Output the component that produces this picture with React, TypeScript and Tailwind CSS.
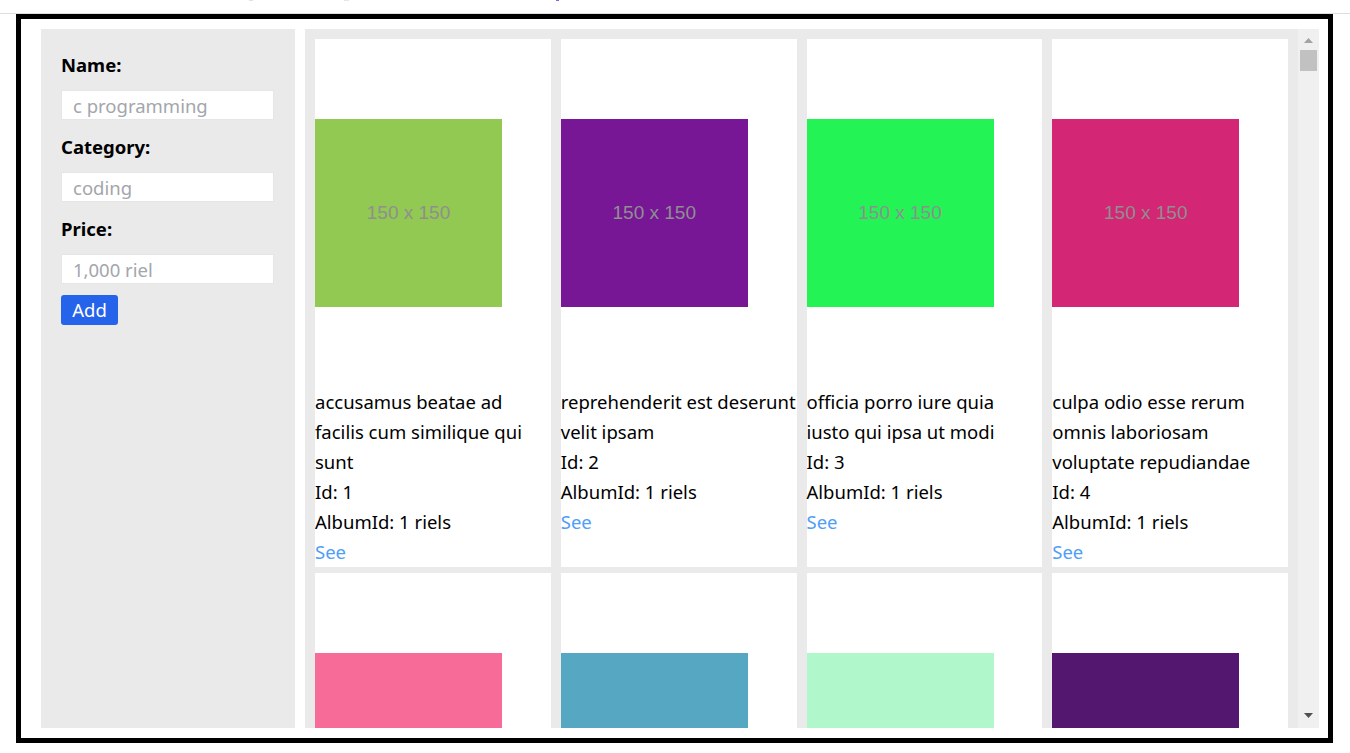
import React from "react";

type Card = { lines: string[]; id: number; color: string; text?: string };

const cards: Card[] = [
  { lines: ["accusamus beatae ad", "facilis cum similique qui", "sunt"], id: 1, color: "#92c952" },
  { lines: ["reprehenderit est deserunt", "velit ipsam"], id: 2, color: "#771796" },
  { lines: ["officia porro iure quia", "iusto qui ipsa ut modi"], id: 3, color: "#24f355" },
  { lines: ["culpa odio esse rerum", "omnis laboriosam", "voluptate repudiandae"], id: 4, color: "#d32776" },
  { lines: ["natus nisi omnis corporis", "facere molestiae rerum in"], id: 5, color: "#f66b97" },
  { lines: ["accusamus ea aliquid et", "amet sequi nemo"], id: 6, color: "#56a8c2" },
  { lines: ["officia delectus", "consequatur vero aut", "veniam explicabo molestias"], id: 7, color: "#b0f7cc" },
  { lines: ["aut porro officiis laborum", "odit ea laudantium corporis"], id: 8, color: "#54176f" },
];

function Field({ label, placeholder, first }: { label: string; placeholder: string; first?: boolean }) {
  return (
    <div className={first ? "" : "mt-[12px]"}>
      <div className="text-[18.5px] leading-[30px] font-bold text-black">{label}</div>
      <input
        placeholder={placeholder}
        className="mt-[10px] block h-[30px] w-[213px] bg-white pl-[11px] text-[18.5px] text-black outline-none placeholder:text-[#a3a6ab] border border-[#e6e6e6]"
      />
    </div>
  );
}

function CardView({ c }: { c: Card }) {
  return (
    <div className="bg-white flex flex-col">
      <div className="py-[80px]">
        <div
          className="w-[187px] h-[188px] flex items-center justify-center text-[19px] text-[#8f8f8f] font-['Liberation_Sans',Arial,sans-serif]"
          style={{ backgroundColor: c.color }}
        >
          150 x 150
        </div>
      </div>
      <div className="text-[18.5px] leading-[30px] text-black">
        {c.lines.map((l, i) => (
          <div key={i} className="whitespace-nowrap">
            {l}
          </div>
        ))}
        <div>Id: {c.id}</div>
        <div>AlbumId: 1 riels</div>
        <a className="block text-[#4f9ef7] cursor-pointer">See</a>
      </div>
    </div>
  );
}

export default function App() {
  return (
    <div className="w-[1350px] h-[753px] bg-white font-['Noto_Sans',sans-serif] overflow-hidden">
      <div className="h-[13px] relative">
        <span className="absolute left-[249px] top-0 w-[4px] h-px bg-[#e2e2e2]" />
        <span className="absolute left-[344px] top-0 w-[5px] h-px bg-[#e6e6e6]" />
        <span className="absolute left-[556px] top-0 w-[3px] h-px bg-[#8b5cf6]" />
      </div>
      <div className="h-px bg-[#dedede]" />
      <div className="ml-[16px] w-[1317px] h-[729px] border-[5px] border-black pt-[10px] pb-[10px] pl-[20px] pr-[9px] flex gap-[10px]">
        <div className="w-[254px] shrink-0 bg-[#eaeaea] pt-[21px] pl-[20px]">
          <Field label="Name:" placeholder="c programming" first />
          <Field label="Category:" placeholder="coding" />
          <Field label="Price:" placeholder="1,000 riel" />
          <button className="mt-[11px] h-[30px] w-[57px] bg-[#2563eb] text-white text-[18.5px] leading-[30px] rounded-[3px] flex items-center justify-center">
            Add
          </button>
        </div>
        <div className="flex-1 bg-[#eaeaea] flex overflow-hidden">
          <div className="flex-1 p-[10px] overflow-hidden">
            <div className="grid grid-cols-4 gap-x-[10px] gap-y-[6px]">
              {cards.map((c) => (
                <CardView key={c.id} c={c} />
              ))}
            </div>
          </div>
          <div className="w-[21px] shrink-0 bg-[#f0f0f0] flex flex-col items-center relative">
            <svg className="mt-[9px]" width="9" height="5" viewBox="0 0 9 5">
              <polygon points="0,5 9,5 4.5,0" fill="#a3a3a3" />
            </svg>
            <div className="mt-[7px] w-[17px] h-[21px] bg-[#c1c1c1]" />
            <svg className="absolute bottom-[10px] left-[6px]" width="9" height="5" viewBox="0 0 9 5">
              <polygon points="0,0 9,0 4.5,5" fill="#505050" />
            </svg>
          </div>
        </div>
      </div>
    </div>
  );
}
